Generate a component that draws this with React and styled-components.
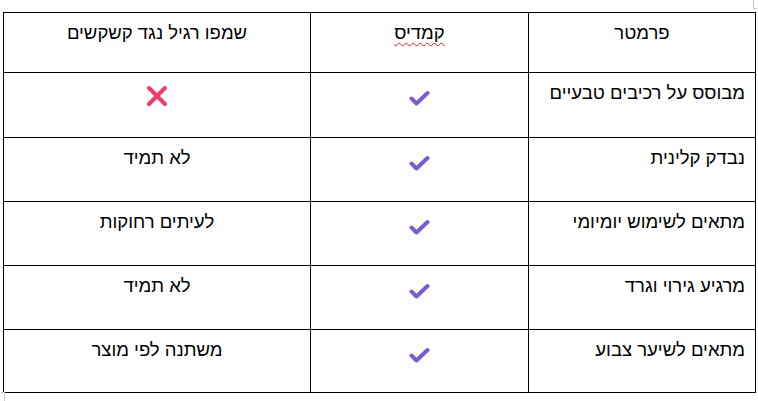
import React from "react";
import styled, { createGlobalStyle } from "styled-components";

const GlobalStyle = createGlobalStyle`
  html, body {
    margin: 0;
    padding: 0;
    background: #ffffff;
  }
  body {
    font-family: "Liberation Sans", Arial, sans-serif;
    color: #000;
  }
`;

const Page = styled.div`
  position: relative;
  width: 758px;
  height: 401px;
  padding: 12px 0 0 3px;
  box-sizing: border-box;
  overflow: hidden;
`;

const CornerMark = styled.span`
  position: absolute;
  width: 3px;
  height: 8px;
  border: 1px solid #c8c8c8;
  ${(p) =>
    p.$pos === "top"
      ? `top: 0; right: 1px; border-bottom: 1px solid #c8c8c8; border-top: none; border-right: none;`
      : `bottom: 0; left: 1px; border-top: 1px solid #c8c8c8; border-bottom: none; border-left: none;`}
`;

const Table = styled.table`
  direction: rtl;
  width: 752px;
  border-collapse: collapse;
  table-layout: fixed;
  font-size: 18.5px;
`;

const Row = styled.tr`
  height: ${(p) => p.$h}px;
`;

const Cell = styled.td`
  border: 1px solid #000;
  padding: 9px 10px 0;
  vertical-align: top;
  text-align: ${(p) => p.$align || "center"};
  line-height: 21px;
  box-sizing: border-box;
`;

const Misspelled = styled.span`
  text-decoration: underline wavy #e02020;
  text-decoration-thickness: 1px;
  text-underline-offset: 3px;
`;

const IconBox = styled.div`
  display: flex;
  justify-content: center;
  padding-top: ${(p) => p.$top}px;
`;

const Check = () => (
  <svg width="21" height="17" viewBox="0 0 21 17">
    <path
      d="M2.5 8.5 L7.5 13.5 L18.5 3"
      fill="none"
      stroke="#7a5bd1"
      strokeWidth="4"
      strokeLinecap="round"
      strokeLinejoin="round"
    />
  </svg>
);

const Cross = () => (
  <svg width="22" height="22" viewBox="0 0 22 22">
    <path
      d="M3 3 L19 19 M19 3 L3 19"
      fill="none"
      stroke="#f23a68"
      strokeWidth="4"
      strokeLinecap="round"
    />
  </svg>
);

const rows = [
  { param: "מבוסס על רכיבים טבעיים", other: null, h: 65 },
  { param: "נבדק קלינית", other: "לא תמיד", h: 64 },
  { param: "מתאים לשימוש יומיומי", other: "לעיתים רחוקות", h: 64 },
  { param: "מרגיע גירוי וגרד", other: "לא תמיד", h: 64 },
  { param: "מתאים לשיער צבוע", other: "משתנה לפי מוצר", h: 63 },
];

export default function App() {
  return (
    <>
      <GlobalStyle />
      <Page>
        <CornerMark $pos="top" />
        <Table>
          <colgroup>
            <col style={{ width: 227 }} />
            <col style={{ width: 218 }} />
            <col style={{ width: 307 }} />
          </colgroup>
          <tbody>
            <Row $h={60}>
              <Cell>פרמטר</Cell>
              <Cell>
                <Misspelled>קמדיס</Misspelled>
              </Cell>
              <Cell>שמפו רגיל נגד קשקשים</Cell>
            </Row>
            {rows.map((r) => (
              <Row key={r.param} $h={r.h}>
                <Cell $align="right">{r.param}</Cell>
                <Cell>
                  <IconBox $top={8}>
                    <Check />
                  </IconBox>
                </Cell>
                <Cell>
                  {r.other ? (
                    r.other
                  ) : (
                    <IconBox $top={3}>
                      <Cross />
                    </IconBox>
                  )}
                </Cell>
              </Row>
            ))}
          </tbody>
        </Table>
        <CornerMark $pos="bottom" />
      </Page>
    </>
  );
}
